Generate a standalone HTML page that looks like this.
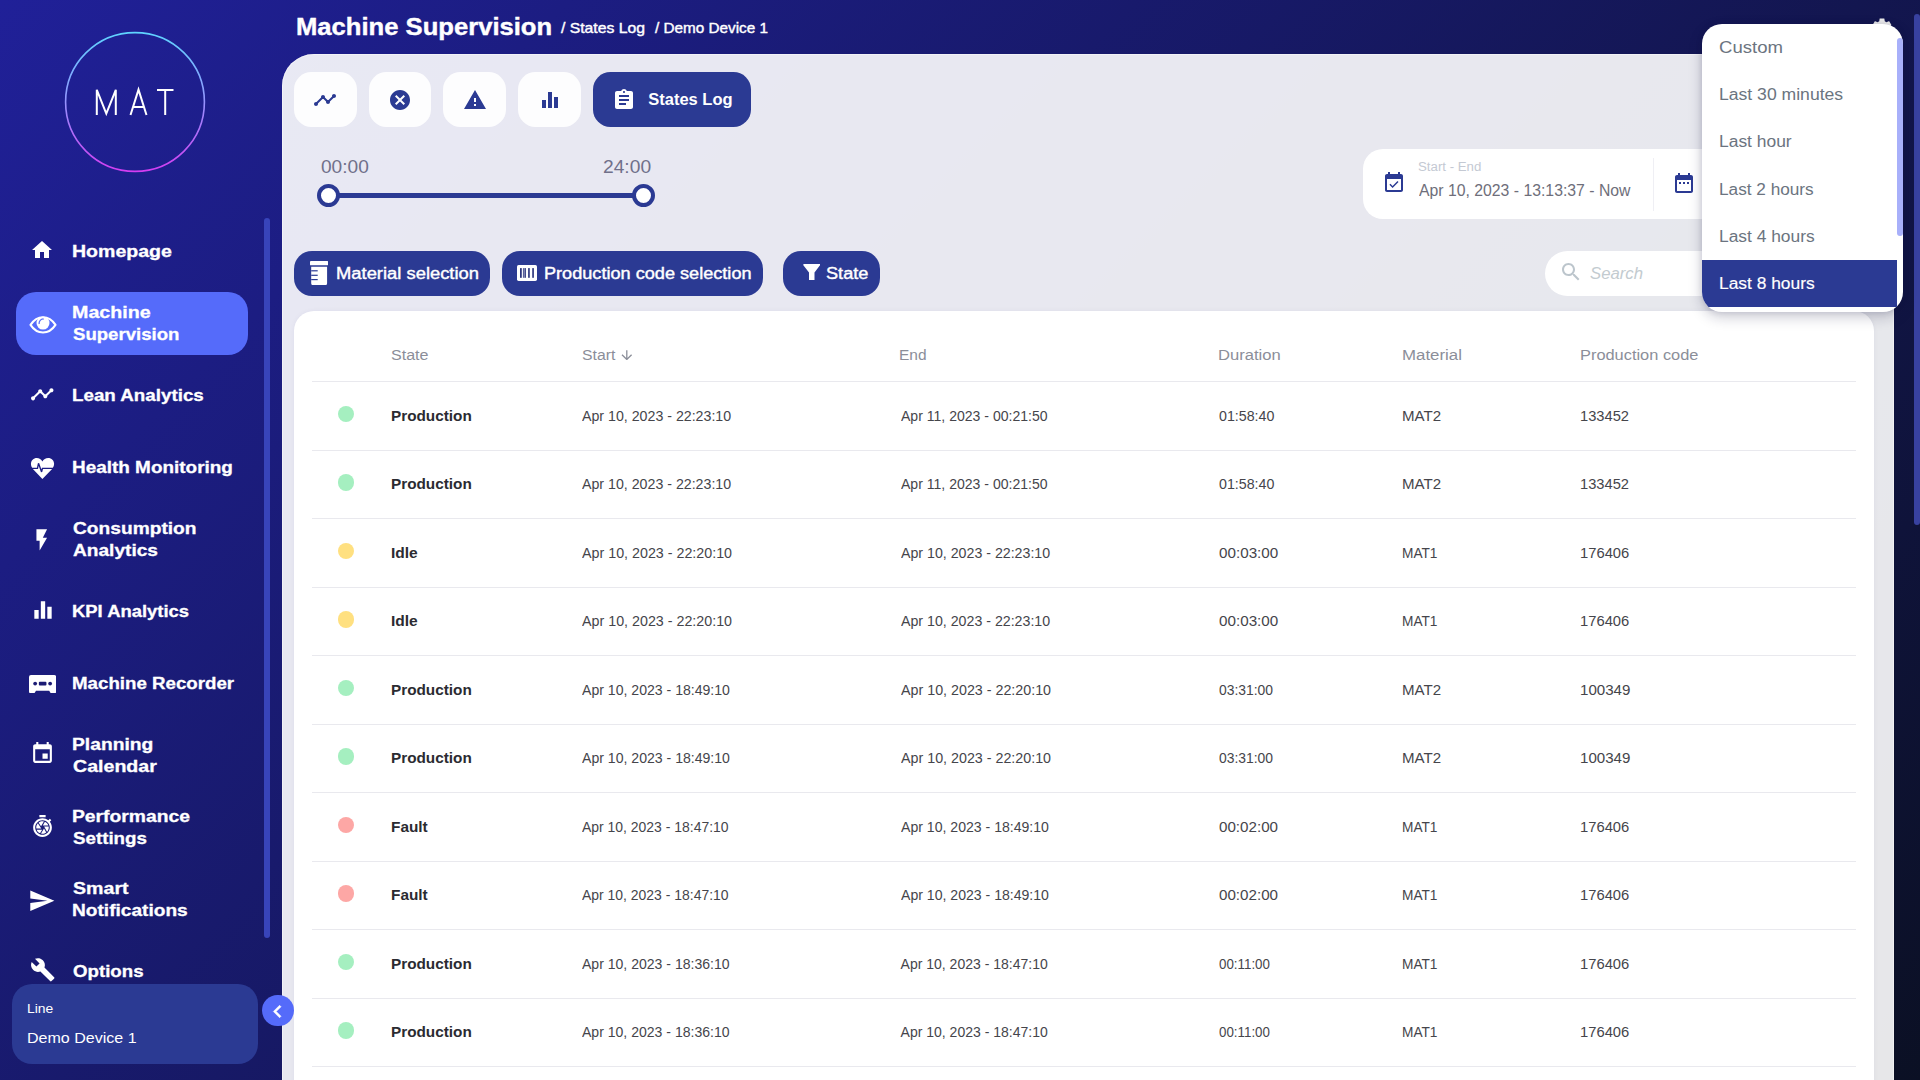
<!DOCTYPE html>
<html><head><meta charset="utf-8"><title>Machine Supervision</title>
<style>
html,body{margin:0;padding:0;width:1920px;height:1080px;overflow:hidden}
body{font-family:"Liberation Sans",sans-serif;background:linear-gradient(135deg,#202098 0%,#0b1024 100%);position:relative}
.b{position:absolute;display:block}
.t{position:absolute;white-space:nowrap;transform-origin:0 50%;display:block}
</style></head><body>
<div class="b" style="left:281.6px;top:53.6px;width:1612.6px;height:1100px;background:rgba(255,255,255,.9);border-radius:32px;box-shadow:inset 0 0 0 1px rgba(255,255,255,.45);"></div>
<svg class="b" style="left:55px;top:22px" width="160" height="160" viewBox="0 0 160 160">
<defs><linearGradient id="lg" x1="0" y1="0" x2="0" y2="1"><stop offset="0" stop-color="#5fd4ff"/><stop offset="0.45" stop-color="#8f9cff"/><stop offset="1" stop-color="#d43df2"/></linearGradient></defs>
<circle cx="80" cy="80" r="69.4" fill="none" stroke="url(#lg)" stroke-width="1.6"/>
<g fill="none" stroke="#fff" stroke-width="2" stroke-linejoin="miter">
<polyline points="41.8,93 41.8,67.8 51.3,91.5 60.8,67.8 60.8,93"/>
<polyline points="75.5,93 83.5,67.6 91.5,93"/><line x1="78" y1="85" x2="89" y2="85"/>
<line x1="102" y1="68" x2="118.5" y2="68"/><line x1="110.2" y1="68" x2="110.2" y2="93"/>
</g></svg>
<div class="b" style="left:264px;top:218px;width:6px;height:720px;background:#3844ba;border-radius:3px;"></div>
<div class="b" style="left:16px;top:291.6px;width:232.1px;height:63.4px;background:#556bfa;border-radius:20px;"></div>
<div class="b" style="left:12px;top:984px;width:246px;height:80px;background:#2b3a93;border-radius:20px;"></div>
<div class="b" style="left:261.9px;top:995px;width:32px;height:31.4px;background:#556bfa;border-radius:16px;"></div>
<div class="b" style="left:294px;top:72px;width:62.8px;height:55px;background:#fdfdfe;border-radius:17.5px;"></div>
<div class="b" style="left:368.7px;top:72px;width:62.8px;height:55px;background:#fdfdfe;border-radius:17.5px;"></div>
<div class="b" style="left:443.4px;top:72px;width:62.8px;height:55px;background:#fdfdfe;border-radius:17.5px;"></div>
<div class="b" style="left:518.2px;top:72px;width:62.8px;height:55px;background:#fdfdfe;border-radius:17.5px;"></div>
<div class="b" style="left:593px;top:72px;width:158px;height:55px;background:#2b3a93;border-radius:17.5px;"></div>
<div class="b" style="left:328px;top:193px;width:316px;height:5px;background:#2b3a93;border-radius:2px;"></div>
<div class="b" style="left:316.7px;top:184px;width:23px;height:23px;background:#fff;border-radius:12px;box-sizing:border-box;border:4.5px solid #2b3a93;"></div>
<div class="b" style="left:631.9px;top:184px;width:23px;height:23px;background:#fff;border-radius:12px;box-sizing:border-box;border:4.5px solid #2b3a93;"></div>
<div class="b" style="left:1363px;top:149px;width:511px;height:69.5px;background:#fff;border-radius:20px;"></div>
<div class="b" style="left:1652.5px;top:158px;width:1px;height:53px;background:#efeff4;border-radius:0px;"></div>
<div class="b" style="left:294px;top:251px;width:196px;height:45px;background:#2b3a93;border-radius:18px;"></div>
<div class="b" style="left:502px;top:251px;width:261px;height:45px;background:#2b3a93;border-radius:18px;"></div>
<div class="b" style="left:783px;top:251px;width:97px;height:45px;background:#2b3a93;border-radius:18px;"></div>
<div class="b" style="left:1545px;top:251px;width:329px;height:45px;background:#fff;border-radius:22.5px;"></div>
<div class="b" style="left:294px;top:311px;width:1580px;height:800px;background:#fff;border-radius:20px;box-shadow:0 0 5px rgba(40,40,90,.05);"></div>
<div class="b" style="left:312px;top:381.0px;width:1544px;height:1px;background:#e9e9ee;border-radius:0px;"></div>
<div class="b" style="left:312px;top:449.5px;width:1544px;height:1px;background:#e9e9ee;border-radius:0px;"></div>
<div class="b" style="left:312px;top:518.0px;width:1544px;height:1px;background:#e9e9ee;border-radius:0px;"></div>
<div class="b" style="left:312px;top:586.5px;width:1544px;height:1px;background:#e9e9ee;border-radius:0px;"></div>
<div class="b" style="left:312px;top:655.0px;width:1544px;height:1px;background:#e9e9ee;border-radius:0px;"></div>
<div class="b" style="left:312px;top:723.5px;width:1544px;height:1px;background:#e9e9ee;border-radius:0px;"></div>
<div class="b" style="left:312px;top:792.0px;width:1544px;height:1px;background:#e9e9ee;border-radius:0px;"></div>
<div class="b" style="left:312px;top:860.5px;width:1544px;height:1px;background:#e9e9ee;border-radius:0px;"></div>
<div class="b" style="left:312px;top:929.0px;width:1544px;height:1px;background:#e9e9ee;border-radius:0px;"></div>
<div class="b" style="left:312px;top:997.5px;width:1544px;height:1px;background:#e9e9ee;border-radius:0px;"></div>
<div class="b" style="left:312px;top:1066.0px;width:1544px;height:1px;background:#e9e9ee;border-radius:0px;"></div>
<div class="b" style="left:1914px;top:14px;width:6px;height:511px;background:#3841a0;border-radius:3px;"></div>
<span class="t" style="left:295.96px;top:13px;font-size:24px;line-height:27px;height:27px;color:#fff;font-weight:700;-webkit-text-stroke:0.4px #fff;transform:scaleX(1.0670);">Machine Supervision</span>
<span class="t" style="left:561.40px;top:20px;font-size:14.5px;line-height:16px;height:16px;color:#fff;-webkit-text-stroke:0.4px #fff;transform:scaleX(1.0854);">/ States Log</span>
<span class="t" style="left:655.00px;top:20px;font-size:14.5px;line-height:16px;height:16px;color:#fff;-webkit-text-stroke:0.4px #fff;transform:scaleX(1.0537);">/ Demo Device 1</span>
<span class="t" style="left:72.13px;top:242px;font-size:16.8px;line-height:19px;height:19px;color:#fff;font-weight:700;-webkit-text-stroke:0.3px #fff;transform:scaleX(1.1644);">Homepage</span>
<span class="t" style="left:72.12px;top:303px;font-size:16.8px;line-height:19px;height:19px;color:#fff;font-weight:700;-webkit-text-stroke:0.3px #fff;transform:scaleX(1.1722);">Machine</span>
<span class="t" style="left:72.93px;top:325px;font-size:16.8px;line-height:19px;height:19px;color:#fff;font-weight:700;-webkit-text-stroke:0.3px #fff;transform:scaleX(1.1082);">Supervision</span>
<span class="t" style="left:72.17px;top:386px;font-size:16.8px;line-height:19px;height:19px;color:#fff;font-weight:700;-webkit-text-stroke:0.3px #fff;transform:scaleX(1.1182);">Lean Analytics</span>
<span class="t" style="left:72.16px;top:458px;font-size:16.8px;line-height:19px;height:19px;color:#fff;font-weight:700;-webkit-text-stroke:0.3px #fff;transform:scaleX(1.1280);">Health Monitoring</span>
<span class="t" style="left:72.53px;top:519px;font-size:16.8px;line-height:19px;height:19px;color:#fff;font-weight:700;-webkit-text-stroke:0.3px #fff;transform:scaleX(1.1426);">Consumption</span>
<span class="t" style="left:72.92px;top:541px;font-size:16.8px;line-height:19px;height:19px;color:#fff;font-weight:700;-webkit-text-stroke:0.3px #fff;transform:scaleX(1.1390);">Analytics</span>
<span class="t" style="left:72.19px;top:602px;font-size:16.8px;line-height:19px;height:19px;color:#fff;font-weight:700;-webkit-text-stroke:0.3px #fff;transform:scaleX(1.0982);">KPI Analytics</span>
<span class="t" style="left:72.18px;top:674px;font-size:16.8px;line-height:19px;height:19px;color:#fff;font-weight:700;-webkit-text-stroke:0.3px #fff;transform:scaleX(1.1143);">Machine Recorder</span>
<span class="t" style="left:72.14px;top:735px;font-size:16.8px;line-height:19px;height:19px;color:#fff;font-weight:700;-webkit-text-stroke:0.3px #fff;transform:scaleX(1.1469);">Planning</span>
<span class="t" style="left:72.52px;top:757px;font-size:16.8px;line-height:19px;height:19px;color:#fff;font-weight:700;-webkit-text-stroke:0.3px #fff;transform:scaleX(1.1680);">Calendar</span>
<span class="t" style="left:72.14px;top:807px;font-size:16.8px;line-height:19px;height:19px;color:#fff;font-weight:700;-webkit-text-stroke:0.3px #fff;transform:scaleX(1.1500);">Performance</span>
<span class="t" style="left:72.92px;top:829px;font-size:16.8px;line-height:19px;height:19px;color:#fff;font-weight:700;-webkit-text-stroke:0.3px #fff;transform:scaleX(1.1170);">Settings</span>
<span class="t" style="left:72.91px;top:879px;font-size:16.8px;line-height:19px;height:19px;color:#fff;font-weight:700;-webkit-text-stroke:0.3px #fff;transform:scaleX(1.1693);">Smart</span>
<span class="t" style="left:72.15px;top:901px;font-size:16.8px;line-height:19px;height:19px;color:#fff;font-weight:700;-webkit-text-stroke:0.3px #fff;transform:scaleX(1.1385);">Notifications</span>
<span class="t" style="left:72.55px;top:962px;font-size:16.8px;line-height:19px;height:19px;color:#fff;font-weight:700;-webkit-text-stroke:0.3px #fff;transform:scaleX(1.1133);">Options</span>
<span class="t" style="left:27.49px;top:1001px;font-size:13px;line-height:15px;height:15px;color:#fff;transform:scaleX(1.0691);">Line</span>
<span class="t" style="left:27.32px;top:1029px;font-size:15px;line-height:17px;height:17px;color:#fff;transform:scaleX(1.0691);">Demo Device 1</span>
<span class="t" style="left:648.27px;top:90px;font-size:16.5px;line-height:18px;height:18px;color:#fff;font-weight:700;">States Log</span>
<span class="t" style="left:321.23px;top:157px;font-size:18px;line-height:20px;height:20px;color:#70708a;transform:scaleX(1.0610);">00:00</span>
<span class="t" style="left:602.84px;top:157px;font-size:18px;line-height:20px;height:20px;color:#70708a;transform:scaleX(1.0675);">24:00</span>
<span class="t" style="left:1418.47px;top:160px;font-size:12px;line-height:14px;height:14px;color:#c4c9d3;transform:scaleX(1.1040);">Start - End</span>
<span class="t" style="left:1419.40px;top:182px;font-size:16px;line-height:17px;height:17px;color:#6e6e7a;transform:scaleX(0.9865);">Apr 10, 2023 - 13:13:37 - Now</span>
<span class="t" style="left:335.93px;top:265px;font-size:16px;line-height:17px;height:17px;color:#fff;-webkit-text-stroke:0.4px #fff;transform:scaleX(1.1486);">Material selection</span>
<span class="t" style="left:544.05px;top:265px;font-size:16px;line-height:17px;height:17px;color:#fff;-webkit-text-stroke:0.4px #fff;transform:scaleX(1.1328);">Production code selection</span>
<span class="t" style="left:826.27px;top:265px;font-size:16px;line-height:17px;height:17px;color:#fff;-webkit-text-stroke:0.4px #fff;transform:scaleX(1.1338);">State</span>
<span class="t" style="left:1590.47px;top:265px;font-size:16px;line-height:17px;height:17px;color:#c3cbd0;font-style:italic;transform:scaleX(1.0450);">Search</span>
<span class="t" style="left:390.76px;top:347px;font-size:14px;line-height:16px;height:16px;color:#8b8e99;transform:scaleX(1.1473);">State</span>
<span class="t" style="left:581.67px;top:347px;font-size:14px;line-height:16px;height:16px;color:#8b8e99;transform:scaleX(1.1249);">Start</span>
<span class="t" style="left:899.36px;top:347px;font-size:14px;line-height:16px;height:16px;color:#8b8e99;transform:scaleX(1.1063);">End</span>
<span class="t" style="left:1218.17px;top:347px;font-size:14px;line-height:16px;height:16px;color:#8b8e99;transform:scaleX(1.1852);">Duration</span>
<span class="t" style="left:1401.85px;top:347px;font-size:14px;line-height:16px;height:16px;color:#8b8e99;transform:scaleX(1.2023);">Material</span>
<span class="t" style="left:1579.69px;top:347px;font-size:14px;line-height:16px;height:16px;color:#8b8e99;transform:scaleX(1.1704);">Production code</span>
<div class="b" style="left:337.5px;top:405.9px;width:16.4px;height:16.4px;background:#a5efc0;border-radius:9px;"></div>
<span class="t" style="left:391.28px;top:408px;font-size:14px;line-height:16px;height:16px;color:#2b2b31;font-weight:700;transform:scaleX(1.0936);">Production</span>
<span class="t" style="left:581.80px;top:408px;font-size:14px;line-height:16px;height:16px;color:#45454b;transform:scaleX(1.0138);">Apr 10, 2023 - 22:23:10</span>
<span class="t" style="left:900.60px;top:408px;font-size:14px;line-height:16px;height:16px;color:#45454b;transform:scaleX(1.0034);">Apr 11, 2023 - 00:21:50</span>
<span class="t" style="left:1219.07px;top:408px;font-size:14px;line-height:16px;height:16px;color:#45454b;transform:scaleX(1.0164);">01:58:40</span>
<span class="t" style="left:1402.00px;top:408px;font-size:14px;line-height:16px;height:16px;color:#45454b;transform:scaleX(1.0758);">MAT2</span>
<span class="t" style="left:1579.97px;top:408px;font-size:14px;line-height:16px;height:16px;color:#45454b;transform:scaleX(1.0492);">133452</span>
<div class="b" style="left:337.5px;top:474.4px;width:16.4px;height:16.4px;background:#a5efc0;border-radius:9px;"></div>
<span class="t" style="left:391.28px;top:476px;font-size:14px;line-height:16px;height:16px;color:#2b2b31;font-weight:700;transform:scaleX(1.0936);">Production</span>
<span class="t" style="left:581.80px;top:476px;font-size:14px;line-height:16px;height:16px;color:#45454b;transform:scaleX(1.0138);">Apr 10, 2023 - 22:23:10</span>
<span class="t" style="left:900.60px;top:476px;font-size:14px;line-height:16px;height:16px;color:#45454b;transform:scaleX(1.0034);">Apr 11, 2023 - 00:21:50</span>
<span class="t" style="left:1219.07px;top:476px;font-size:14px;line-height:16px;height:16px;color:#45454b;transform:scaleX(1.0164);">01:58:40</span>
<span class="t" style="left:1402.00px;top:476px;font-size:14px;line-height:16px;height:16px;color:#45454b;transform:scaleX(1.0758);">MAT2</span>
<span class="t" style="left:1579.97px;top:476px;font-size:14px;line-height:16px;height:16px;color:#45454b;transform:scaleX(1.0492);">133452</span>
<div class="b" style="left:337.5px;top:542.9000000000001px;width:16.4px;height:16.4px;background:#ffe080;border-radius:9px;"></div>
<span class="t" style="left:391.27px;top:545px;font-size:14px;line-height:16px;height:16px;color:#2b2b31;font-weight:700;transform:scaleX(1.1063);">Idle</span>
<span class="t" style="left:581.80px;top:545px;font-size:14px;line-height:16px;height:16px;color:#45454b;transform:scaleX(1.0199);">Apr 10, 2023 - 22:20:10</span>
<span class="t" style="left:900.60px;top:545px;font-size:14px;line-height:16px;height:16px;color:#45454b;transform:scaleX(1.0138);">Apr 10, 2023 - 22:23:10</span>
<span class="t" style="left:1219.04px;top:545px;font-size:14px;line-height:16px;height:16px;color:#45454b;transform:scaleX(1.0873);">00:03:00</span>
<span class="t" style="left:1402.11px;top:545px;font-size:14px;line-height:16px;height:16px;color:#45454b;transform:scaleX(0.9774);">MAT1</span>
<span class="t" style="left:1579.97px;top:545px;font-size:14px;line-height:16px;height:16px;color:#45454b;transform:scaleX(1.0548);">176406</span>
<div class="b" style="left:337.5px;top:611.4000000000001px;width:16.4px;height:16.4px;background:#ffe080;border-radius:9px;"></div>
<span class="t" style="left:391.27px;top:613px;font-size:14px;line-height:16px;height:16px;color:#2b2b31;font-weight:700;transform:scaleX(1.1063);">Idle</span>
<span class="t" style="left:581.80px;top:613px;font-size:14px;line-height:16px;height:16px;color:#45454b;transform:scaleX(1.0199);">Apr 10, 2023 - 22:20:10</span>
<span class="t" style="left:900.60px;top:613px;font-size:14px;line-height:16px;height:16px;color:#45454b;transform:scaleX(1.0138);">Apr 10, 2023 - 22:23:10</span>
<span class="t" style="left:1219.04px;top:613px;font-size:14px;line-height:16px;height:16px;color:#45454b;transform:scaleX(1.0873);">00:03:00</span>
<span class="t" style="left:1402.11px;top:613px;font-size:14px;line-height:16px;height:16px;color:#45454b;transform:scaleX(0.9774);">MAT1</span>
<span class="t" style="left:1579.97px;top:613px;font-size:14px;line-height:16px;height:16px;color:#45454b;transform:scaleX(1.0548);">176406</span>
<div class="b" style="left:337.5px;top:679.9000000000001px;width:16.4px;height:16.4px;background:#a5efc0;border-radius:9px;"></div>
<span class="t" style="left:391.28px;top:682px;font-size:14px;line-height:16px;height:16px;color:#2b2b31;font-weight:700;transform:scaleX(1.0936);">Production</span>
<span class="t" style="left:581.80px;top:682px;font-size:14px;line-height:16px;height:16px;color:#45454b;transform:scaleX(1.0056);">Apr 10, 2023 - 18:49:10</span>
<span class="t" style="left:900.60px;top:682px;font-size:14px;line-height:16px;height:16px;color:#45454b;transform:scaleX(1.0199);">Apr 10, 2023 - 22:20:10</span>
<span class="t" style="left:1219.08px;top:682px;font-size:14px;line-height:16px;height:16px;color:#45454b;transform:scaleX(0.9922);">03:31:00</span>
<span class="t" style="left:1402.00px;top:682px;font-size:14px;line-height:16px;height:16px;color:#45454b;transform:scaleX(1.0758);">MAT2</span>
<span class="t" style="left:1579.94px;top:682px;font-size:14px;line-height:16px;height:16px;color:#45454b;transform:scaleX(1.0781);">100349</span>
<div class="b" style="left:337.5px;top:748.4000000000001px;width:16.4px;height:16.4px;background:#a5efc0;border-radius:9px;"></div>
<span class="t" style="left:391.28px;top:750px;font-size:14px;line-height:16px;height:16px;color:#2b2b31;font-weight:700;transform:scaleX(1.0936);">Production</span>
<span class="t" style="left:581.80px;top:750px;font-size:14px;line-height:16px;height:16px;color:#45454b;transform:scaleX(1.0056);">Apr 10, 2023 - 18:49:10</span>
<span class="t" style="left:900.60px;top:750px;font-size:14px;line-height:16px;height:16px;color:#45454b;transform:scaleX(1.0199);">Apr 10, 2023 - 22:20:10</span>
<span class="t" style="left:1219.08px;top:750px;font-size:14px;line-height:16px;height:16px;color:#45454b;transform:scaleX(0.9922);">03:31:00</span>
<span class="t" style="left:1402.00px;top:750px;font-size:14px;line-height:16px;height:16px;color:#45454b;transform:scaleX(1.0758);">MAT2</span>
<span class="t" style="left:1579.94px;top:750px;font-size:14px;line-height:16px;height:16px;color:#45454b;transform:scaleX(1.0781);">100349</span>
<div class="b" style="left:337.5px;top:816.9000000000001px;width:16.4px;height:16.4px;background:#fda7a5;border-radius:9px;"></div>
<span class="t" style="left:391.28px;top:819px;font-size:14px;line-height:16px;height:16px;color:#2b2b31;font-weight:700;transform:scaleX(1.0975);">Fault</span>
<span class="t" style="left:581.80px;top:819px;font-size:14px;line-height:16px;height:16px;color:#45454b;transform:scaleX(0.9960);">Apr 10, 2023 - 18:47:10</span>
<span class="t" style="left:900.60px;top:819px;font-size:14px;line-height:16px;height:16px;color:#45454b;transform:scaleX(1.0056);">Apr 10, 2023 - 18:49:10</span>
<span class="t" style="left:1219.04px;top:819px;font-size:14px;line-height:16px;height:16px;color:#45454b;transform:scaleX(1.0836);">00:02:00</span>
<span class="t" style="left:1402.11px;top:819px;font-size:14px;line-height:16px;height:16px;color:#45454b;transform:scaleX(0.9774);">MAT1</span>
<span class="t" style="left:1579.97px;top:819px;font-size:14px;line-height:16px;height:16px;color:#45454b;transform:scaleX(1.0548);">176406</span>
<div class="b" style="left:337.5px;top:885.4000000000001px;width:16.4px;height:16.4px;background:#fda7a5;border-radius:9px;"></div>
<span class="t" style="left:391.28px;top:887px;font-size:14px;line-height:16px;height:16px;color:#2b2b31;font-weight:700;transform:scaleX(1.0975);">Fault</span>
<span class="t" style="left:581.80px;top:887px;font-size:14px;line-height:16px;height:16px;color:#45454b;transform:scaleX(0.9960);">Apr 10, 2023 - 18:47:10</span>
<span class="t" style="left:900.60px;top:887px;font-size:14px;line-height:16px;height:16px;color:#45454b;transform:scaleX(1.0056);">Apr 10, 2023 - 18:49:10</span>
<span class="t" style="left:1219.04px;top:887px;font-size:14px;line-height:16px;height:16px;color:#45454b;transform:scaleX(1.0836);">00:02:00</span>
<span class="t" style="left:1402.11px;top:887px;font-size:14px;line-height:16px;height:16px;color:#45454b;transform:scaleX(0.9774);">MAT1</span>
<span class="t" style="left:1579.97px;top:887px;font-size:14px;line-height:16px;height:16px;color:#45454b;transform:scaleX(1.0548);">176406</span>
<div class="b" style="left:337.5px;top:953.9000000000001px;width:16.4px;height:16.4px;background:#a5efc0;border-radius:9px;"></div>
<span class="t" style="left:391.28px;top:956px;font-size:14px;line-height:16px;height:16px;color:#2b2b31;font-weight:700;transform:scaleX(1.0936);">Production</span>
<span class="t" style="left:581.80px;top:956px;font-size:14px;line-height:16px;height:16px;color:#45454b;transform:scaleX(1.0029);">Apr 10, 2023 - 18:36:10</span>
<span class="t" style="left:900.60px;top:956px;font-size:14px;line-height:16px;height:16px;color:#45454b;">Apr 10, 2023 - 18:47:10</span>
<span class="t" style="left:1219.10px;top:956px;font-size:14px;line-height:16px;height:16px;color:#45454b;transform:scaleX(0.9524);">00:11:00</span>
<span class="t" style="left:1402.11px;top:956px;font-size:14px;line-height:16px;height:16px;color:#45454b;transform:scaleX(0.9774);">MAT1</span>
<span class="t" style="left:1579.97px;top:956px;font-size:14px;line-height:16px;height:16px;color:#45454b;transform:scaleX(1.0548);">176406</span>
<div class="b" style="left:337.5px;top:1022.4000000000001px;width:16.4px;height:16.4px;background:#a5efc0;border-radius:9px;"></div>
<span class="t" style="left:391.28px;top:1024px;font-size:14px;line-height:16px;height:16px;color:#2b2b31;font-weight:700;transform:scaleX(1.0936);">Production</span>
<span class="t" style="left:581.80px;top:1024px;font-size:14px;line-height:16px;height:16px;color:#45454b;transform:scaleX(1.0029);">Apr 10, 2023 - 18:36:10</span>
<span class="t" style="left:900.60px;top:1024px;font-size:14px;line-height:16px;height:16px;color:#45454b;">Apr 10, 2023 - 18:47:10</span>
<span class="t" style="left:1219.10px;top:1024px;font-size:14px;line-height:16px;height:16px;color:#45454b;transform:scaleX(0.9524);">00:11:00</span>
<span class="t" style="left:1402.11px;top:1024px;font-size:14px;line-height:16px;height:16px;color:#45454b;transform:scaleX(0.9774);">MAT1</span>
<span class="t" style="left:1579.97px;top:1024px;font-size:14px;line-height:16px;height:16px;color:#45454b;transform:scaleX(1.0548);">176406</span>
<svg class="b" style="left:30px;top:237.5px;" width="24" height="24" viewBox="0 0 24 24"><path fill="#fff" d="M10 20v-6h4v6h5v-8h3L12 3 2 12h3v8z"/></svg>
<svg class="b" style="left:28.5px;top:315.500px" width="28" height="18" viewBox="0 0 28 18">
<path fill="none" stroke="#fff" stroke-width="2.100" stroke-linejoin="round" d="M1.500 8.900C5 3.600 9.500 1.300 14 1.300S23 3.600 26.500 8.900C23 14.200 18.500 16.500 14 16.500S5 14.200 1.500 8.900Z"/>
<circle cx="14" cy="7.050" r="6.500" fill="#fff"/>
<path fill="none" stroke="#556bfa" stroke-width="1.250" stroke-linecap="round" d="M10.100 7.500A4.200 4.200 0 0 1 14.300 3"/></svg>
<svg class="b" style="left:30.3px;top:382.2px;" width="24.5" height="24.5" viewBox="0 0 24 24"><path fill="#fff" d="M23 8c0 1.1-.9 2-2 2-.18 0-.35-.02-.51-.07l-3.56 3.55c.05.16.07.34.07.52 0 1.1-.9 2-2 2s-2-.9-2-2c0-.18.02-.36.07-.52l-2.55-2.55c-.16.05-.34.07-.52.07s-.36-.02-.52-.07l-4.55 4.56c.05.16.07.33.07.51 0 1.1-.9 2-2 2s-2-.9-2-2 .9-2 2-2c.18 0 .35.02.51.07l4.56-4.55C8.02 9.36 8 9.18 8 9c0-1.1.9-2 2-2s2 .9 2 2c0 .18-.02.36-.07.52l2.55 2.55c.16-.05.34-.07.52-.07s.36.02.52.07l3.55-3.56C19.02 8.35 19 8.18 19 8c0-1.1.9-2 2-2s2 .9 2 2z"/></svg>
<svg class="b" style="left:22px;top:446px" width="40" height="45" viewBox="0 0 40 45">
<path fill="#fff" d="M20.400 15.500C19.300 13.300 17.200 11.900 14.800 11.900C11.600 11.900 8.950 14.500 8.950 17.800C8.950 19.800 9.700 21.500 10.900 22.900L20.400 32.950L30.100 22.900C31.300 21.500 32.100 19.800 32.100 17.800C32.100 14.500 29.500 11.900 26.200 11.900C23.700 11.900 21.500 13.300 20.400 15.500Z"/>
<polyline fill="none" stroke="#1c1d84" stroke-width="1.350" stroke-linejoin="miter" stroke-miterlimit="3" points="7,22.350 15.500,22.350 16.500,17.300 19.600,25.900 20.450,22.350 34,22.350"/></svg>
<svg class="b" style="left:29.3px;top:526.5px;" width="25.5" height="25.5" viewBox="0 0 24 24"><path fill="#fff" d="M7 2v11h3v9l7-12h-4l4-8z"/></svg>
<svg class="b" style="left:29.5px;top:597px;" width="26" height="26" viewBox="0 0 24 24"><path fill="#fff" d="M10 20h4V4h-4v16zm-6 0h4v-8H4v8zM16 9v11h4V9h-4z"/></svg>
<svg class="b" style="left:30.3px;top:741.3px;" width="25" height="25" viewBox="0 0 24 24"><path fill="#fff" d="M17 12h-5v5h5v-5zM16 1v2H8V1H6v2H5c-1.11 0-1.99.9-1.99 2L3 19c0 1.1.89 2 2 2h14c1.1 0 2-.9 2-2V5c0-1.1-.9-2-2-2h-1V1h-2zm3 18H5V8h14v11z"/></svg>
<svg class="b" style="left:30.3px;top:813.5px;" width="25" height="25" viewBox="0 0 24 24"><path fill="#fff" d="M15 1H9v2h6V1zm4.03 6.39l1.42-1.42c-.43-.51-.9-.99-1.41-1.41l-1.42 1.42C16.07 4.74 14.12 4 12 4c-4.97 0-9 4.03-9 9s4.02 9 9 9 9-4.03 9-9c0-2.12-.74-4.07-1.97-5.61zM12 20c-3.87 0-7-3.13-7-7s3.13-7 7-7 7 3.13 7 7-3.13 7-7 7zm-.32-5H6.35c.57 1.62 1.82 2.92 3.41 3.56l-.11-.06 2.03-3.5zm5.97-4c-.57-1.6-1.78-2.89-3.34-3.54L12.26 11h5.39zm-7.04 7.83c.45.11.91.17 1.39.17 1.34 0 2.57-.45 3.57-1.19l-2.11-3.9-2.85 4.92zM7.55 8.99C6.59 10.05 6 11.46 6 13c0 .34.04.67.09 1h4.72L7.55 8.990zm8.79 8.14C17.37 16.06 18 14.6 18 13c0-.34-.04-.67-.09-1h-4.34l2.77 5.13zm-3.01-9.980C12.9 7.06 12.46 7 12 7c-1.4 0-2.69.49-3.710 1.290l2.320 3.560 2.720-4.700z"/></svg>
<svg class="b" style="left:27.7px;top:886.5px;" width="27.5" height="27.5" viewBox="0 0 24 24"><path fill="#fff" d="M2.01 21L23 12 2.01 3 2 10l15 2-15 2z"/></svg>
<svg class="b" style="left:29.7px;top:957px;" width="25.5" height="25.5" viewBox="0 0 24 24"><path fill="#fff" d="M22.7 19l-9.1-9.1c.9-2.3.4-5-1.5-6.9-2-2-5-2.4-7.4-1.3L9 6 6 9 1.6 4.7C.4 7.1.9 10.1 2.9 12.1c1.900 1.900 4.600 2.400 6.900 1.500l9.100 9.100c.4.4 1 .4 1.400 0l2.300-2.300c.5-.4.5-1.100.1-1.400z"/></svg>
<svg class="b" style="left:28.85px;top:674.7px" width="27.2" height="18.4" viewBox="0 0 27.2 18.4">
<path fill="#fff" d="M2 0h23.2a2 2 0 0 1 2 2v14.6a1.800 1.800 0 0 1-1.800 1.800h-2.600a1.800 1.800 0 0 1-1.500-.8l-1.100-1.800h-13.200l-1.100 1.800a1.800 1.800 0 0 1-1.500.8h-2.600a1.800 1.800 0 0 1-1.800-1.800v-14.600a2 2 0 0 1 2-2z"/>
<g fill="#1b1b74"><circle cx="6.150" cy="8.600" r="1.900"/><circle cx="21.150" cy="8.600" r="1.900"/><rect x="9.850" y="6.800" width="7.600" height="3.600" rx="0.900"/></g></svg>
<svg class="b" style="left:265.4px;top:998.7px;" width="25" height="25" viewBox="0 0 24 24"><path fill="#fff" stroke="#fff" stroke-width="0.5" d="M15.41 7.41L14 6l-6 6 6 6 1.410-1.410L10.830 12z"/></svg>
<svg class="b" style="left:313.3px;top:87.9px;" width="24" height="24" viewBox="0 0 24 24"><path fill="#2b3a93" d="M23 8c0 1.1-.9 2-2 2-.18 0-.35-.02-.51-.07l-3.56 3.55c.05.16.07.34.07.52 0 1.1-.9 2-2 2s-2-.9-2-2c0-.18.02-.36.07-.52l-2.55-2.55c-.16.05-.34.07-.52.07s-.36-.02-.52-.07l-4.55 4.56c.05.16.07.33.07.51 0 1.1-.9 2-2 2s-2-.9-2-2 .9-2 2-2c.18 0 .35.02.51.07l4.56-4.55C8.02 9.36 8 9.18 8 9c0-1.1.9-2 2-2s2 .9 2 2c0 .18-.02.36-.07.52l2.55 2.55c.16-.05.34-.07.52-.07s.36.02.52.07l3.55-3.56C19.02 8.35 19 8.18 19 8c0-1.1.9-2 2-2s2 .9 2 2z"/></svg>
<svg class="b" style="left:387.9px;top:88px;" width="24" height="24" viewBox="0 0 24 24"><path fill="#2b3a93" d="M12 2C6.47 2 2 6.47 2 12s4.47 10 10 10 10-4.47 10-10S17.53 2 12 2zm5 13.59L15.59 17 12 13.41 8.41 17 7 15.59 10.59 12 7 8.41 8.41 7 12 10.59 15.59 7 17 8.41 13.41 12 17 15.59z"/></svg>
<svg class="b" style="left:463.2px;top:88.3px;" width="24" height="24" viewBox="0 0 24 24"><path fill="#2b3a93" d="M1 21h22L12 2 1 21zm12-3h-2v-2h2v2zm0-4h-2v-4h2v4z"/></svg>
<svg class="b" style="left:537.9px;top:87.7px;" width="24" height="24" viewBox="0 0 24 24"><path fill="#2b3a93" d="M10 20h4V4h-4v16zm-6 0h4v-8H4v8zM16 9v11h4V9h-4z"/></svg>
<svg class="b" style="left:612.4px;top:88px;" width="24" height="24" viewBox="0 0 24 24"><path fill="#fff" d="M19 3h-4.18C14.4 1.84 13.3 1 12 1c-1.3 0-2.4.84-2.82 2H5c-1.1 0-2 .9-2 2v14c0 1.1.9 2 2 2h14c1.1 0 2-.9 2-2V5c0-1.1-.9-2-2-2zm-7 0c.55 0 1 .45 1 1s-.45 1-1 1-1-.45-1-1 .45-1 1-1zm2 14H7v-2h7v2zm3-4H7v-2h10v2zm0-4H7V7h10v2z"/></svg>
<svg class="b" style="left:1382px;top:171px;" width="24" height="24" viewBox="0 0 24 24"><path fill="#2b3a93" d="M16.53 11.06L15.47 10l-4.880 4.880-2.120-2.120-1.060 1.060L10.590 17l5.940-5.940zM19 3h-1V1h-2v2H8V1H6v2H5c-1.110 0-1.990.9-1.990 2L3 19c0 1.100.890 2 2 2h14c1.100 0 2-.9 2-2V5c0-1.100-.9-2-2-2zm0 16H5V8h14v11z"/></svg>
<svg class="b" style="left:1671.5px;top:171px;" width="24" height="24" viewBox="0 0 24 24"><path fill="#2b3a93" d="M9 11H7v2h2v-2zm4 0h-2v2h2v-2zm4 0h-2v2h2v-2zm2-7h-1V2h-2v2H8V2H6v2H5c-1.110 0-1.990.9-1.990 2L3 20c0 1.100.890 2 2 2h14c1.100 0 2-.9 2-2V6c0-1.100-.9-2-2-2zm0 16H5V9h14v11z"/></svg>
<svg class="b" style="left:1558.7px;top:259.9px;" width="24" height="24" viewBox="0 0 24 24"><path fill="#bcc5cc" d="M15.5 14h-.79l-.28-.27C15.41 12.59 16 11.11 16 9.5 16 5.91 13.09 3 9.5 3S3 5.91 3 9.5 5.91 16 9.5 16c1.610 0 3.090-.590 4.230-1.570l.270.280v.790l5 4.990L20.490 19l-4.990-5zm-6 0C7.010 14 5 11.990 5 9.500S7.010 5 9.500 5 14 7.010 14 9.500 11.990 14 9.500 14z"/></svg>
<svg class="b" style="left:621px;top:350px" width="11.6" height="10.4" viewBox="0 0 11.6 10.4"><path fill="none" stroke="#8b8e99" stroke-width="1.3" d="M5.800 0.200V9.200M1 4.700L5.800 9.500L10.600 4.700"/></svg>
<svg class="b" style="left:802.7px;top:264px" width="17.5" height="16.2" viewBox="0 0 17.5 16.2"><path fill="#fff" d="M0.900 0h15.700a0.700 0.700 0 0 1 0.550 1.150l-5.650 7.450v7.600h-5.500v-7.600l-5.650-7.450a0.700 0.700 0 0 1 0.550-1.150z"/></svg>
<svg class="b" style="left:517px;top:265px" width="20" height="16" viewBox="0 0 20 16">
<rect x="0" y="0" width="20" height="15.900" rx="1.600" fill="#fff"/>
<g fill="#16206f"><rect x="3.100" y="3.100" width="1.600" height="9.700"/><rect x="5.950" y="3.100" width="0.750" height="9.700"/><rect x="7.150" y="3.100" width="0.550" height="9.700"/><rect x="8.050" y="3.100" width="0.800" height="9.700"/><rect x="11.200" y="3.100" width="1.500" height="9.700"/><rect x="15.300" y="3.100" width="1.500" height="9.700"/></g></svg>
<svg class="b" style="left:309.9px;top:261px" width="18.2" height="24.400" viewBox="0 0 18.2 24.4">
<rect x="0" y="0" width="18.200" height="4.300" rx="0.900" fill="#fff"/>
<path fill="#fff" d="M1.200 5.700h15.900v16.600a2 2 0 0 1-2 2h-11.900a2 2 0 0 1-2-2z"/>
<g fill="#2b3a93"><rect x="1.200" y="9.200" width="6.500" height="1.200"/><rect x="1.200" y="13.700" width="6.500" height="1.200"/><rect x="1.200" y="18" width="6.500" height="1.200"/></g></svg>
<svg class="b" style="left:1870.4px;top:16px;" width="24" height="24" viewBox="0 0 24 24"><path fill="#ececec" d="M19.14 12.94c.04-.3.06-.61.06-.94 0-.32-.02-.64-.07-.94l2.030-1.580c.18-.14.23-.41.12-.61l-1.920-3.320c-.12-.22-.37-.29-.59-.22l-2.390.96c-.5-.38-1.030-.7-1.620-.94l-.36-2.540c-.04-.24-.24-.41-.48-.41h-3.840c-.24 0-.43.17-.47.41l-.36 2.540c-.59.24-1.130.57-1.620.94l-2.390-.96c-.22-.08-.47 0-.59.22L2.740 8.870c-.12.21-.08.47.12.61l2.030 1.580c-.05.3-.09.63-.09.94s.02.64.07.94l-2.030 1.580c-.18.14-.23.41-.12.61l1.920 3.320c.12.22.37.29.59.22l2.390-.96c.5.38 1.030.7 1.620.94l.36 2.540c.05.24.24.41.48.41h3.840c.24 0 .44-.17.47-.41l.36-2.540c.59-.24 1.130-.56 1.620-.94l2.390.96c.22.08.47 0 .59-.22l1.920-3.320c.12-.22.07-.47-.12-.61l-2.010-1.580zM12 15.600c-1.980 0-3.600-1.620-3.600-3.600s1.620-3.600 3.600-3.600 3.600 1.620 3.600 3.600-1.620 3.600-3.600 3.600z"/></svg>
<div class="b" style="left:1702px;top:24px;width:201px;height:288px;background:#fff;border-radius:20px;overflow:hidden;box-shadow:0 5px 14px rgba(20,20,60,.22),0 0 6px rgba(20,20,60,.12)"><div class="b" style="left:0;top:236px;width:195px;height:47.2px;background:#2b3a93"></div><div class="b" style="left:195px;top:13.5px;width:6px;height:198.5px;background:#a8b0fa;border-radius:3px"></div></div>
<span class="t" style="left:1719.47px;top:39px;font-size:16px;line-height:17px;height:17px;color:#6b7480;transform:scaleX(1.1599);">Custom</span>
<span class="t" style="left:1718.99px;top:86px;font-size:16px;line-height:17px;height:17px;color:#6b7480;transform:scaleX(1.0989);">Last 30 minutes</span>
<span class="t" style="left:1719.01px;top:133px;font-size:16px;line-height:17px;height:17px;color:#6b7480;transform:scaleX(1.0892);">Last hour</span>
<span class="t" style="left:1719.02px;top:181px;font-size:16px;line-height:17px;height:17px;color:#6b7480;transform:scaleX(1.0749);">Last 2 hours</span>
<span class="t" style="left:1719.01px;top:228px;font-size:16px;line-height:17px;height:17px;color:#6b7480;transform:scaleX(1.0865);">Last 4 hours</span>
<span class="t" style="left:1719.01px;top:275px;font-size:16px;line-height:17px;height:17px;color:#fff;-webkit-text-stroke:0.15px #fff;transform:scaleX(1.0865);">Last 8 hours</span>
</body></html>
